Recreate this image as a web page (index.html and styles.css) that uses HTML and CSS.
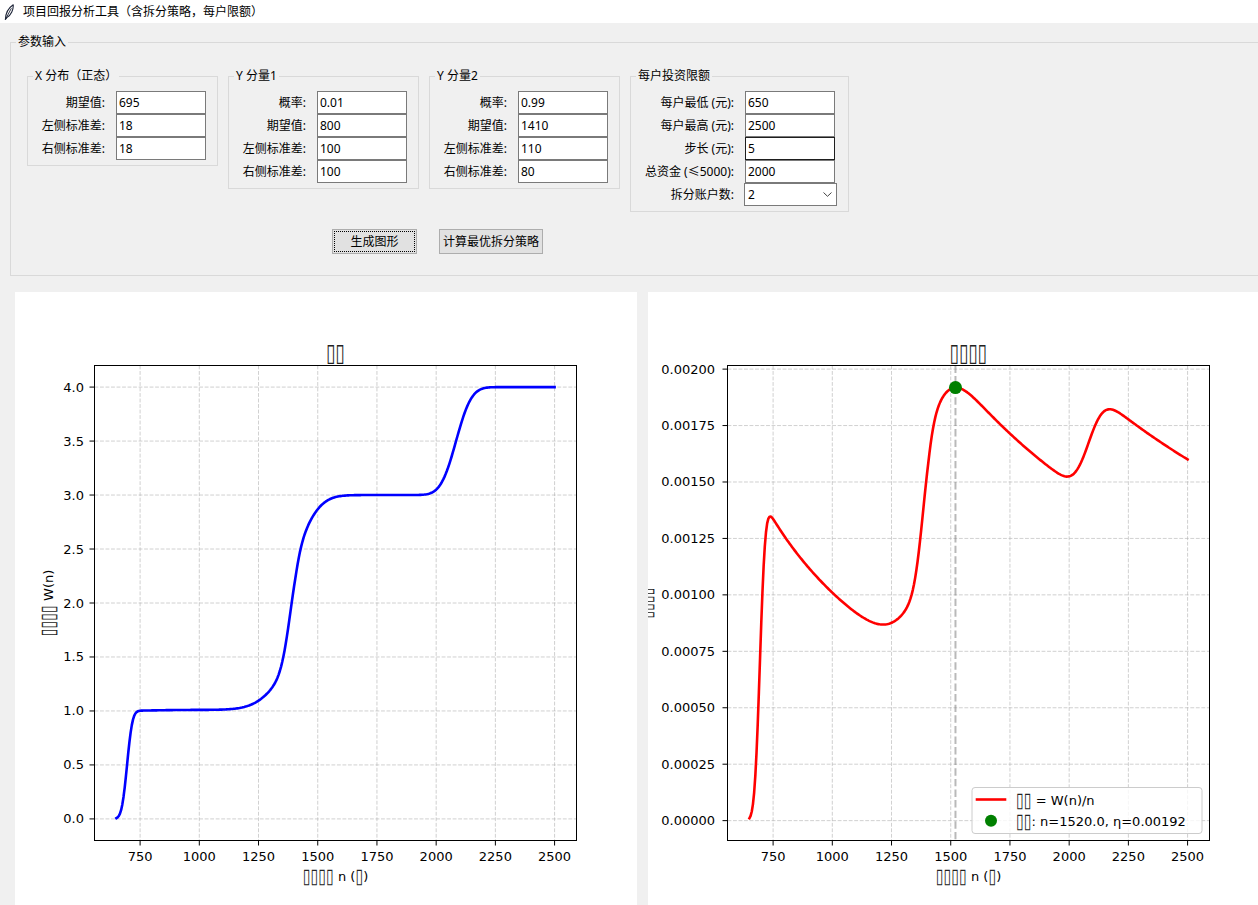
FILE: index.html
```html
<!DOCTYPE html>
<html lang="zh-CN">
<head>
<meta charset="utf-8">
<title>项目回报分析工具（含拆分策略，每户限额）</title>
<link rel="stylesheet" href="styles.css">
</head>
<body>
<header class="titlebar">
  <svg class="app-icon" width="10" height="16" viewBox="0 0 10 16" aria-hidden="true">
    <path d="M1.4 15.4 C1.6 10.4 3.6 4.6 9.2 0.8 C9.6 5.4 7.2 11 2.8 13.6 Z" fill="#ffffff" stroke="#1d2438" stroke-width="1.1" stroke-linejoin="round"/>
    <path d="M1.4 15.4 L7.4 4.2" fill="none" stroke="#1d2438" stroke-width="0.9"/>
  </svg>
  <span class="app-title">项目回报分析工具（含拆分策略，每户限额）</span>
</header>

<main class="window">
  <fieldset class="group outer">
    <legend>参数输入</legend>
    <div class="groups">
      <fieldset class="group sub">
        <legend>X 分布（正态）</legend>
        <div class="form">
          <span class="field-label">期望值:</span><span class="entry">695</span>
          <span class="field-label">左侧标准差:</span><span class="entry">18</span>
          <span class="field-label">右侧标准差:</span><span class="entry">18</span>
        </div>
      </fieldset>
      <fieldset class="group sub">
        <legend>Y 分量1</legend>
        <div class="form">
          <span class="field-label">概率:</span><span class="entry">0.01</span>
          <span class="field-label">期望值:</span><span class="entry">800</span>
          <span class="field-label">左侧标准差:</span><span class="entry">100</span>
          <span class="field-label">右侧标准差:</span><span class="entry">100</span>
        </div>
      </fieldset>
      <fieldset class="group sub">
        <legend>Y 分量2</legend>
        <div class="form">
          <span class="field-label">概率:</span><span class="entry">0.99</span>
          <span class="field-label">期望值:</span><span class="entry">1410</span>
          <span class="field-label">左侧标准差:</span><span class="entry">110</span>
          <span class="field-label">右侧标准差:</span><span class="entry">80</span>
        </div>
      </fieldset>
      <fieldset class="group sub limits">
        <legend>每户投资限额</legend>
        <div class="form">
          <span class="field-label">每户最低 (元):</span><span class="entry">650</span>
          <span class="field-label">每户最高 (元):</span><span class="entry">2500</span>
          <span class="field-label">步长 (元):</span><span class="entry entry-focus">5</span>
          <span class="field-label">总资金 (≤5000):</span><span class="entry">2000</span>
          <span class="field-label">拆分账户数:</span>
          <span class="combo"><span class="combo-value">2</span>
            <svg class="combo-arrow" width="9" height="5" viewBox="0 0 9 5" aria-hidden="true"><path d="M0.5 0.5 L4.5 4.3 L8.5 0.5" fill="none" stroke="#444" stroke-width="1"/></svg>
          </span>
        </div>
      </fieldset>
    </div>
    <div class="actions">
      <button class="btn btn-plot" type="button">生成图形</button>
      <button class="btn btn-opt" type="button">计算最优拆分策略</button>
    </div>
  </fieldset>

  <section class="charts">
    <div class="canvas"><svg id="chart-w" class="chart" width="622" height="620" viewBox="0 0 622 620"></svg></div>
    <div class="canvas"><svg id="chart-eta" class="chart" width="622" height="620" viewBox="0 0 622 620"></svg></div>
  </section>
</main>
<script src="script.js"></script>
</body>
</html>
```

FILE: styles.css
```css
html, body {
  margin: 0;
  padding: 0;
}

body {
  width: 1258px;
  height: 905px;
  overflow: hidden;
  background: #f0f0f0;
  color: #000;
  font-family: "Noto Sans", "Noto Sans CJK SC", sans-serif;
  font-size: 12px;
  line-height: 16px;
}

.titlebar {
  height: 23px;
  background: #ffffff;
  display: flex;
  align-items: center;
  padding-left: 4px;
  gap: 9px;
  box-sizing: border-box;
}

.app-icon {
  flex: none;
}

.app-title {
  font-size: 12px;
  line-height: 16px;
  white-space: nowrap;
}

.window {
  display: block;
}

.group {
  margin: 0;
  border: 1px solid #d9d9d9;
  min-width: 0;
  box-sizing: border-box;
}

.group > legend {
  padding: 0 2px;
  font-size: 12px;
  line-height: 16px;
  white-space: nowrap;
}

.outer {
  margin: 11px 0 0 10px;
  padding: 18px 0 21px 5px;
  width: 1262px;
}

.groups {
  display: flex;
  align-items: flex-start;
  gap: 10px;
  margin-left: 11px;
}

.sub {
  padding: 7px 11px 5px 5px;
  flex: none;
}

.limits {
  padding-right: 13px;
}

.form {
  display: grid;
  grid-template-columns: 72px 90px;
  grid-auto-rows: 23px;
  column-gap: 11px;
  align-items: center;
}

.limits .form {
  grid-template-columns: 98px 90px;
}

.field-label {
  text-align: right;
  white-space: nowrap;
  line-height: 16px;
}

.entry {
  box-sizing: border-box;
  height: 23px;
  border: 1px solid #7a7a7a;
  background: #ffffff;
  padding: 0 2px;
  line-height: 21px;
  white-space: nowrap;
}

.entry-focus {
  border-color: #1e1e1e;
}

.combo {
  box-sizing: border-box;
  height: 23px;
  width: 93px;
  margin-left: -1px;
  border: 1px solid #7a7a7a;
  background: #ffffff;
  display: flex;
  align-items: center;
  justify-content: space-between;
  padding: 0 4px 0 3px;
  line-height: 21px;
}

.combo-arrow {
  flex: none;
}

.actions {
  display: flex;
  gap: 22px;
  margin: 17px 0 0 316px;
}

.btn {
  box-sizing: border-box;
  height: 25px;
  border: 1px solid #adadad;
  background: #e1e1e1;
  color: #000;
  font-family: "Noto Sans", "Noto Sans CJK SC", sans-serif;
  font-size: 12px;
  line-height: 16px;
  padding: 0;
  margin: 0;
}

.btn-plot {
  width: 85px;
  outline: 1px dotted #000;
  outline-offset: -3px;
}

.btn-opt {
  width: 104px;
}

.charts {
  display: flex;
  gap: 11px;
  margin: 16px 0 0 15px;
}

.canvas {
  flex: none;
  width: 622px;
  height: 620px;
  background: #ffffff;
}

.chart {
  display: block;
}

.chart text {
  font-family: "DejaVu Sans", sans-serif;
  fill: #000;
}

.chart .tofu {
  font-size: 160%;
  fill: #222;
}

.chart .tick-label {
  font-size: 13px;
}

.chart .axis-label {
  font-size: 13px;
}

.chart .chart-title {
  font-size: 15.6px;
}

.chart .legend-text {
  font-size: 13px;
}

.grid line {
  stroke: #b0b0b0;
  stroke-opacity: 0.6;
  stroke-width: 1;
  stroke-dasharray: 3.85 1.66;
}

.spine {
  fill: none;
  stroke: #000;
  stroke-width: 1;
}

.tick {
  stroke: #000;
  stroke-width: 1;
}

.series {
  fill: none;
  stroke-width: 2.6;
  stroke-linejoin: round;
  stroke-linecap: square;
}

.series-blue {
  stroke: #0000ff;
}

.series-red {
  stroke: #ff0000;
}

.vline {
  stroke: #808080;
  stroke-opacity: 0.55;
  stroke-width: 2;
  stroke-dasharray: 7.4 3.2;
}

.marker {
  fill: #008000;
}

.legend-box {
  fill: #ffffff;
  fill-opacity: 0.8;
  stroke: #cccccc;
  stroke-width: 1;
}
```

FILE: script.js
```javascript
(function () {
  var NS = 'http://www.w3.org/2000/svg';

  function el(tag, attrs, parent, text) {
    var e = document.createElementNS(NS, tag);
    for (var k in attrs) {
      if (Object.prototype.hasOwnProperty.call(attrs, k)) e.setAttribute(k, attrs[k]);
    }
    if (text !== undefined) e.textContent = text;
    if (parent) parent.appendChild(e);
    return e;
  }

  /* CJK glyphs missing from the plot font show as boxes; each box run is a tspan
     squeezed to the narrow advance of the font's missing-glyph box */
  function label(attrs, parent, str) {
    var t = el('text', attrs, parent);
    var base = parseFloat(window.getComputedStyle(t).fontSize) || 13;
    str.split(/(▯+)/).forEach(function (part) {
      if (!part) return;
      if (part.charAt(0) === '▯') {
        el('tspan', {
          'class': 'tofu',
          textLength: (part.length * base * 0.6).toFixed(2),
          lengthAdjust: 'spacingAndGlyphs'
        }, t, part);
      } else {
        el('tspan', {}, t, part);
      }
    });
    return t;
  }

  function erf(x) {
    var s = x < 0 ? -1 : 1;
    x = Math.abs(x);
    var t = 1 / (1 + 0.3275911 * x);
    var y = 1 - (((((1.061405429 * t - 1.453152027) * t) + 1.421413741) * t - 0.284496736) * t + 0.254829592) * t * Math.exp(-x * x);
    return s * y;
  }
  function Phi(z) { return 0.5 * (1 + erf(z / Math.SQRT2)); }
  function splitPhi(n, m, sl, sr) { return Phi((n - m) / (n < m ? sl : sr)); }

  function W(n) {
    return Phi((n - 695) / 18)
      + 0.01 * Phi((n - 800) / 100)
      + 1.99 * (0.45 * Phi((n - 1385) / 30) + 0.55 * splitPhi(n, 1406, 110, 80))
      + Phi((n - 2084) / 51);
  }

  var wData = [], etaData = [];
  for (var n = 650; n <= 2500; n += 5) {
    var w = W(n);
    wData.push([n, w]);
    etaData.push([n, w / n]);
  }

  var BOX = { l: 79.5, t: 73.5, w: 482, h: 475 };
  var XLIM = [557.5, 2592.5];
  var XTICKS = [750, 1000, 1250, 1500, 1750, 2000, 2250, 2500];

  function range(a, b, step) {
    var out = [];
    for (var v = a; v <= b + step / 1000; v += step) out.push(v);
    return out;
  }

  function drawChart(svg, cfg) {
    var b = BOX;
    var yl = cfg.ylim;
    function sx(v) { return b.l + (v - XLIM[0]) / (XLIM[1] - XLIM[0]) * b.w; }
    function sy(v) { return b.t + (yl[1] - v) / (yl[1] - yl[0]) * b.h; }

    var defs = el('defs', {}, svg);
    var cp = el('clipPath', { id: cfg.id + '-clip' }, defs);
    el('rect', { x: b.l, y: b.t, width: b.w, height: b.h }, cp);

    var grid = el('g', { 'class': 'grid' }, svg);
    XTICKS.forEach(function (v) {
      el('line', { x1: sx(v), y1: b.t, x2: sx(v), y2: b.t + b.h }, grid);
    });
    cfg.yticks.forEach(function (v) {
      el('line', { x1: b.l, y1: sy(v), x2: b.l + b.w, y2: sy(v) }, grid);
    });

    var plot = el('g', { 'clip-path': 'url(#' + cfg.id + '-clip)' }, svg);
    if (cfg.vline !== undefined) {
      el('line', { 'class': 'vline', x1: sx(cfg.vline), y1: b.t, x2: sx(cfg.vline), y2: b.t + b.h }, plot);
    }
    var d = cfg.data.map(function (p, i) {
      return (i ? 'L' : 'M') + sx(p[0]).toFixed(2) + ' ' + sy(p[1]).toFixed(2);
    }).join(' ');
    el('path', { d: d, 'class': 'series ' + cfg.seriesClass }, plot);
    if (cfg.marker) {
      el('circle', { 'class': 'marker', cx: sx(cfg.marker[0]), cy: sy(cfg.marker[1]), r: 6.5 }, svg);
    }

    el('rect', { 'class': 'spine', x: b.l, y: b.t, width: b.w, height: b.h }, svg);

    var ticks = el('g', {}, svg);
    XTICKS.forEach(function (v) {
      var x = sx(v);
      el('line', { 'class': 'tick', x1: x, y1: b.t + b.h, x2: x, y2: b.t + b.h + 5 }, ticks);
      el('text', { 'class': 'tick-label', x: x, y: b.t + b.h + 15.5, 'text-anchor': 'middle', 'dominant-baseline': 'central' }, ticks, String(v));
    });
    cfg.yticks.forEach(function (v) {
      var y = sy(v);
      el('line', { 'class': 'tick', x1: b.l - 5, y1: y, x2: b.l, y2: y }, ticks);
      el('text', { 'class': 'tick-label', x: b.l - cfg.labelGap, y: y, 'text-anchor': 'end', 'dominant-baseline': 'central' }, ticks, v.toFixed(cfg.decimals));
    });

    label({ 'class': 'chart-title', x: b.l + b.w / 2, y: 60, 'text-anchor': 'middle', 'dominant-baseline': 'central' }, svg, cfg.title);
    label({ 'class': 'axis-label', x: b.l + b.w / 2, y: 584, 'text-anchor': 'middle', 'dominant-baseline': 'central' }, svg, cfg.xlabel);
    var cy = b.t + b.h / 2;
    label({ 'class': 'axis-label', x: cfg.ylabelX, y: cy, 'text-anchor': 'middle', 'dominant-baseline': 'central', transform: 'rotate(-90 ' + cfg.ylabelX + ' ' + cy + ')' }, svg, cfg.ylabel);

    return { sx: sx, sy: sy };
  }

  drawChart(document.getElementById('chart-w'), {
    id: 'cw',
    ylim: [-0.2, 4.2],
    yticks: range(0, 4, 0.5),
    decimals: 1,
    labelGap: 10.5,
    data: wData,
    seriesClass: 'series-blue',
    title: '▯▯',
    xlabel: '▯▯▯▯ n (▯)',
    ylabel: '▯▯▯▯ W(n)',
    ylabelX: 32.5
  });

  var etaSvg = document.getElementById('chart-eta');
  var bestN = 1520;
  drawChart(etaSvg, {
    id: 'ce',
    ylim: [-0.000088, 0.002016],
    yticks: range(0, 0.002, 0.00025),
    decimals: 5,
    labelGap: 12.5,
    data: etaData,
    seriesClass: 'series-red',
    vline: bestN,
    marker: [bestN, W(bestN) / bestN],
    title: '▯▯▯▯',
    xlabel: '▯▯▯▯ n (▯)',
    ylabel: '▯▯▯▯',
    ylabelX: -3
  });

  var lg = el('g', {}, etaSvg);
  el('rect', { 'class': 'legend-box', x: 324, y: 495.5, width: 230, height: 46, rx: 3, ry: 3 }, lg);
  el('line', { 'class': 'series series-red', x1: 329, y1: 507.5, x2: 357, y2: 507.5 }, lg);
  el('circle', { 'class': 'marker', cx: 343, cy: 528.7, r: 6 }, lg);
  label({ 'class': 'legend-text', x: 368, y: 507.5, 'dominant-baseline': 'central' }, lg, '▯▯ = W(n)/n');
  label({ 'class': 'legend-text', x: 368, y: 528.7, 'dominant-baseline': 'central' }, lg, '▯▯: n=1520.0, η=0.00192');
})();
```
